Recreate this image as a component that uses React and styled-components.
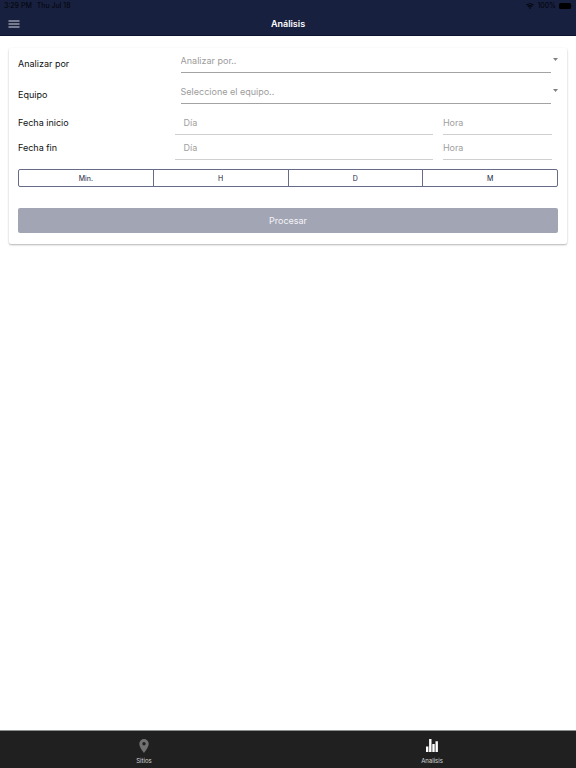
import React from 'react';
import styled, { createGlobalStyle } from 'styled-components';

const GlobalStyle = createGlobalStyle`
  * {
    box-sizing: border-box;
  }

  body {
    margin: 0;
    background: #fff;
    font-family: Inter, 'Liberation Sans', sans-serif;
    font-size: 9px;
    color: #111;
  }

  button, input, select {
    font: inherit;
  }
`;

const Page = styled.div`
  display: flex;
  flex-direction: column;
  min-height: 100vh;
`;

const Header = styled.header`
  background: #18203f;
  border-bottom: 1px solid #0d142f;
`;

const StatusBar = styled.div`
  display: flex;
  justify-content: space-between;
  height: 12px;
  padding: 0 4px;
  font-size: 7px;
  line-height: 12px;
  color: #020308;
`;

const StatusGroup = styled.div`
  display: flex;
  align-items: center;
  gap: ${props => props.$gap}px;
`;

const TitleBar = styled.div`
  display: grid;
  grid-template-columns: 1fr auto 1fr;
  align-items: center;
  height: 23px;
  padding: 0 8px;
`;

const MenuButton = styled.button`
  display: flex;
  justify-self: start;
  padding: 0;
  border: 0;
  background: none;
`;

const Title = styled.h1`
  margin: 0;
  font-size: 9px;
  font-weight: 600;
  line-height: 12px;
  color: #fff;
`;

const Main = styled.main`
  flex: 1;
  padding: 12px 9px;
`;

const Card = styled.form`
  padding: 0 9px 11px;
  border-radius: 2px;
  background: #fff;
  box-shadow: 0 1px 2px rgba(0, 0, 0, 0.3);
`;

const Row = styled.div`
  display: grid;
  grid-template-columns: 29% 1fr;
  align-items: center;
  height: ${props => props.$height}px;
`;

const Label = styled.label`
  line-height: 12px;
`;

const SelectBox = styled.div`
  display: flex;
  align-self: start;
  gap: 2px;
  padding-left: 6px;
`;

const Select = styled.select`
  flex: 1;
  min-width: 0;
  height: 25px;
  padding: 0;
  border: 0;
  border-bottom: 1px solid #a3a3a3;
  border-radius: 0;
  appearance: none;
  background: none;
  color: #9c9c9c;
`;

const Arrow = styled.svg`
  margin-top: 10px;
`;

const DateFields = styled.div`
  display: flex;
  gap: 10px;
  padding-right: 6px;
`;

const Input = styled.input`
  flex: ${props => props.$grow} 1 0;
  min-width: 0;
  height: 25px;
  padding: 0;
  border: 0;
  border-bottom: 1px solid #cfcfcf;
  background: none;
  text-indent: ${props => props.$indent || 0}px;

  &::placeholder {
    color: #a0a0a0;
    opacity: 1;
  }
`;

const Segments = styled.div`
  display: flex;
  height: 18px;
  margin-top: 9px;
  border: 1px solid #666b87;
  border-radius: 2px;
`;

const Segment = styled.button`
  flex: 1;
  padding: 0;
  border: 0;
  background: none;
  font-size: 7px;
  color: #18203f;

  & + & {
    border-left: 1px solid #666b87;
  }
`;

const Submit = styled.button`
  width: 100%;
  height: 25px;
  margin-top: 21px;
  padding: 0;
  border: 0;
  border-radius: 2px;
  background: #a2a5b4;
  color: #f4f4f7;
`;

const TabBar = styled.nav`
  display: flex;
  height: 38px;
  border-top: 1px solid #8b908e;
  background: #202020;
`;

const Tab = styled.a`
  display: flex;
  flex: 1;
  flex-direction: column;
  align-items: center;
  gap: 4px;
  padding-top: 8px;
  font-size: 6px;
  line-height: 8px;
  color: #d8d8d8;
  text-decoration: none;
`;

const periods = ['Min.', 'H', 'D', 'M'];

function SelectRow({ id, label, placeholder }) {
  return (
    <Row $height={31}>
      <Label htmlFor={id}>{label}</Label>
      <SelectBox>
        <Select id={id} defaultValue="">
          <option value="">{placeholder}</option>
        </Select>
        <Arrow width="5" height="4" viewBox="0 0 5 4" aria-hidden="true">
          <path d="M0 0h5L2.5 3z" fill="#808080" />
        </Arrow>
      </SelectBox>
    </Row>
  );
}

function DateRow({ id, label }) {
  return (
    <Row $height={25}>
      <Label htmlFor={id}>{label}</Label>
      <DateFields>
        <Input id={id} $grow={258} $indent={9} placeholder="Día" />
        <Input $grow={109} placeholder="Hora" aria-label={`${label}, hora`} />
      </DateFields>
    </Row>
  );
}

function App() {
  return (
    <Page>
      <GlobalStyle />
      <Header>
        <StatusBar>
          <StatusGroup $gap={5}>
            <span>3:29 PM</span>
            <span>Thu Jul 18</span>
          </StatusGroup>
          <StatusGroup $gap={3}>
            <svg width="8" height="6" viewBox="0 0 8 6" aria-hidden="true">
              <path
                d="M.4 2.2a5.2 5.2 0 0 1 7.2 0M1.8 3.6a3.2 3.2 0 0 1 4.4 0"
                fill="none"
                stroke="#020308"
                strokeWidth="1.1"
              />
              <path d="M4 6 2.8 4.7a1.8 1.8 0 0 1 2.4 0z" fill="#020308" />
            </svg>
            <span>100%</span>
            <svg width="13" height="6" viewBox="0 0 13 6" aria-hidden="true">
              <rect width="12" height="6" rx="1.5" fill="#000" />
              <path d="M12.4 2v2q.6-.3.6-1t-.6-1z" fill="#000" />
            </svg>
          </StatusGroup>
        </StatusBar>
        <TitleBar>
          <MenuButton type="button" aria-label="Menu">
            <svg width="12" height="8" viewBox="0 0 12 8">
              <path
                d="M.5 1h11M.5 4h11M.5 7h11"
                stroke="#d3d5dc"
                strokeWidth="1.1"
              />
            </svg>
          </MenuButton>
          <Title>Análisis</Title>
        </TitleBar>
      </Header>
      <Main>
        <Card onSubmit={e => e.preventDefault()}>
          <SelectRow id="tipo" label="Analizar por" placeholder="Analizar por.." />
          <SelectRow id="equipo" label="Equipo" placeholder="Seleccione el equipo.." />
          <DateRow id="inicio" label="Fecha inicio" />
          <DateRow id="fin" label="Fecha fin" />
          <Segments role="group" aria-label="Periodo">
            {periods.map(period => (
              <Segment type="button" key={period}>
                {period}
              </Segment>
            ))}
          </Segments>
          <Submit type="submit">Procesar</Submit>
        </Card>
      </Main>
      <TabBar>
        <Tab href="#sitios">
          <svg width="10" height="14" viewBox="0 0 10 14" aria-hidden="true">
            <path
              d="M5 0a4.700 4.700 0 0 0-4.700 4.700C.3 8.200 5 14 5 14s4.700-5.800 4.700-9.300A4.700 4.700 0 0 0 5 0zm0 6.400a1.700 1.700 0 1 1 0-3.400 1.700 1.700 0 0 1 0 3.400z"
              fill="#707070"
            />
          </svg>
          Sitios
        </Tab>
        <Tab href="#analisis" aria-current="page">
          <svg width="12" height="14" viewBox="0 0 12 14" aria-hidden="true">
            <path
              d="M0 7.500h2.400V13H0zM3.100 0h2.400v13H3.100zM6.300 5h2.400v8H6.300zM9.500 2.200h2.400V13H9.500z"
              fill="#fff"
            />
          </svg>
          Analisis
        </Tab>
      </TabBar>
    </Page>
  );
}

export default App;
